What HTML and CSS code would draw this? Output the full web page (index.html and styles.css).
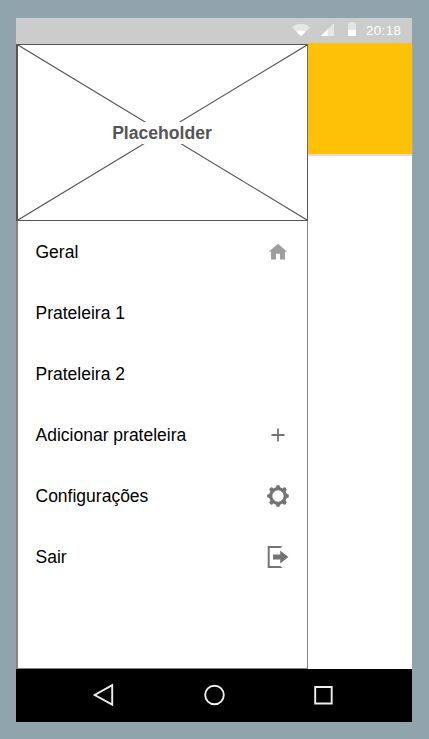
FILE: index.html
```html
<!DOCTYPE html>
<html lang="pt-BR">
<head>
<meta charset="utf-8">
<title>Menu</title>
<link rel="stylesheet" href="styles.css">
</head>
<body>
<div class="phone">
  <header class="status">
    <svg class="wifi" width="18" height="14" viewBox="0 0 18 14"><path fill="#e6e6e6" d="M0 4.200C5-.4 13-.4 18 4.200L9 13.200z"/><path fill="#fff" d="M4.500 8.700C7 7 11 7 13.500 8.700L9 13.200z"/></svg>
    <svg class="signal" width="13" height="13" viewBox="0 0 13 13"><path fill="#e6e6e6" d="M13 0v13H0z"/><path fill="#fff" d="M6.500 6.500V13H0z"/></svg>
    <svg class="battery" width="8" height="14" viewBox="0 0 8 14"><path fill="#e6e6e6" d="M2 0h4v1h1q1 0 1 1v6H0V2q0-1 1-1h1z"/><path fill="#fff" d="M0 8h8v5q0 1-1 1H1q-1 0-1-1z"/></svg>
    <time class="clock">20:18</time>
  </header>
  <main class="screen">
    <aside class="drawer">
      <div class="placeholder">
        <svg class="cross" width="289" height="175" viewBox="0 0 289 175"><path d="M0 0l289 175M289 0L0 175" stroke="#555" stroke-width="1.150"/></svg>
        <span class="label">Placeholder</span>
      </div>
      <nav class="menu">
        <a class="item"><span>Geral</span>
          <svg width="24" height="24" viewBox="0 0 24 24"><path fill="#9e9e9e" d="M12 3.700l9.200 8H19v7.900h-5v-5.800h-4v5.800H5v-7.900H2.800z"/></svg></a>
        <a class="item"><span>Prateleira 1</span></a>
        <a class="item"><span>Prateleira 2</span></a>
        <a class="item"><span>Adicionar prateleira</span>
          <svg width="24" height="24" viewBox="0 0 24 24"><path d="M12 5.500v13M5.500 12h13" stroke="#757575" stroke-width="1.800"/></svg></a>
        <a class="item"><span>Configurações</span>
          <svg width="24" height="24" viewBox="0 0 24 24"><g fill="none" stroke="#757575"><circle cx="12" cy="12" r="7.300" stroke-width="3.300"/><path stroke-width="4.200" stroke-linecap="round" d="M12 3.100v.8M12 20.100v.8M3.100 12h.8M20.100 12h.8M5.500 5.500l.4.400M18.100 18.100l.4.400M5.500 18.500l.4-.4M18.100 5.900l.4-.4"/></g></svg></a>
        <a class="item"><span>Sair</span>
          <svg width="24" height="24" viewBox="0 0 24 24"><path fill="#757575" d="M1.700 1H16.500l-2 2H3.700v18h10.800l2 2H1.700zM7 9.500h7.200V5.600l8.200 6.400-8.200 6.400V14.500H7z"/></svg></a>
      </nav>
    </aside>
    <section class="content"><div class="appbar"></div></section>
  </main>
  <footer class="navbar">
    <svg width="24" height="24" viewBox="0 0 24 24"><path d="M20.200 2.200v19.500L2.700 12z"/></svg>
    <svg width="24" height="24" viewBox="0 0 24 24"><circle cx="12.500" cy="12" r="9.300"/></svg>
    <svg width="24" height="24" viewBox="0 0 24 24"><path d="M3.200 4h16.500v16.500H3.200z"/></svg>
  </footer>
</div>
</body>
</html>
```
FILE: styles.css
```css
* { box-sizing: border-box; }
body {
  margin: 0;
  height: 739px;
  padding: 18px 17px 17px 16px;
  background: #90a4ae;
  font-family: "Liberation Sans", Arial, sans-serif;
}
svg { display: block; flex: none; }
.phone {
  width: 396px;
  height: 704px;
  display: flex;
  flex-direction: column;
  background: #fff;
}
.status {
  height: 26px;
  flex: none;
  display: flex;
  align-items: flex-start;
  justify-content: flex-end;
  padding: 4px 10px 0 0;
  background: #ccc;
}
.wifi { margin: 1px 11px 0 0; }
.signal { margin: 1px 14px 0 0; }
.battery { margin-right: 10px; }
.clock {
  width: 36px;
  color: #fff;
  font-size: 13.300px;
  line-height: 17px;
  letter-spacing: 0.400px;
}
.screen { flex: 1; display: flex; min-height: 0; }
.drawer {
  width: 292px;
  display: flex;
  flex-direction: column;
  border: solid #858585;
  border-width: 0 1px 1px 2px;
}
.placeholder {
  height: 177px;
  margin: 0 -1px 0 -2px;
  flex: none;
  display: grid;
  place-items: center;
  border: solid #555;
  border-width: 1px 1px 1px 2px;
}
.cross, .label { grid-area: 1 / 1; }
.label {
  padding: 1px 0;
  margin-right: 1px;
  background: #fff;
  color: #555;
  font-size: 17.600px;
  font-weight: bold;
  line-height: 20px;
}
.menu { display: flex; flex-direction: column; }
.item {
  height: 61px;
  display: flex;
  align-items: center;
  justify-content: space-between;
  padding: 0 17px 0 17.500px;
  color: #000;
  font-size: 17.500px;
}
.item span { padding-top: 2px; }
.content { flex: 1; }
.appbar {
  height: 111px;
  margin-top: -1px;
  background: #ffc107;
  box-shadow: 0 2px 1px #ddd;
}
.navbar {
  height: 53px;
  flex: none;
  display: flex;
  justify-content: space-between;
  align-items: center;
  padding: 0 76px 2px;
  background: #000;
}
.navbar svg { fill: none; stroke: #eee; stroke-width: 1.900; }
```
